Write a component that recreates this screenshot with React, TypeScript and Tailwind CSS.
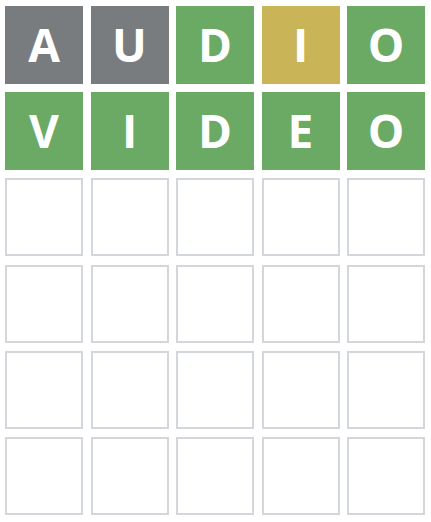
import React from "react";

type State = "absent" | "correct" | "present" | "empty";

const rows: { l: string; s: State }[][] = [
  [
    { l: "A", s: "absent" },
    { l: "U", s: "absent" },
    { l: "D", s: "correct" },
    { l: "I", s: "present" },
    { l: "O", s: "correct" },
  ],
  [
    { l: "V", s: "correct" },
    { l: "I", s: "correct" },
    { l: "D", s: "correct" },
    { l: "E", s: "correct" },
    { l: "O", s: "correct" },
  ],
];

const empty = Array.from({ length: 5 }, () => ({ l: "", s: "empty" as State }));
const all = [...rows, empty, empty, empty, empty];

function Tile({ l, s }: { l: string; s: State }) {
  const cls =
    s === "absent"
      ? "bg-[#787c7e]"
      : s === "correct"
      ? "bg-[#6aaa64]"
      : s === "present"
      ? "bg-[#c9b458]"
      : "border-2 border-[#d3d6da] bg-white";
  return (
    <div
      className={`w-[78px] h-[78px] flex items-center justify-center text-white font-bold text-[46px] leading-none pb-[3px] ${cls}`}
      style={{ fontFamily: '"Open Sans", "Noto Sans", sans-serif' }}
    >
      {l}
    </div>
  );
}

export default function App() {
  return (
    <div className="w-[431px] h-[522px] bg-white pl-[5px] pt-[6px]">
      <div className="grid grid-cols-[repeat(5,78px)] gap-x-[7.5px] gap-y-[8.2px]">
        {all.map((row, r) =>
          row.map((t, c) => <Tile key={`${r}-${c}`} l={t.l} s={t.s} />)
        )}
      </div>
    </div>
  );
}
